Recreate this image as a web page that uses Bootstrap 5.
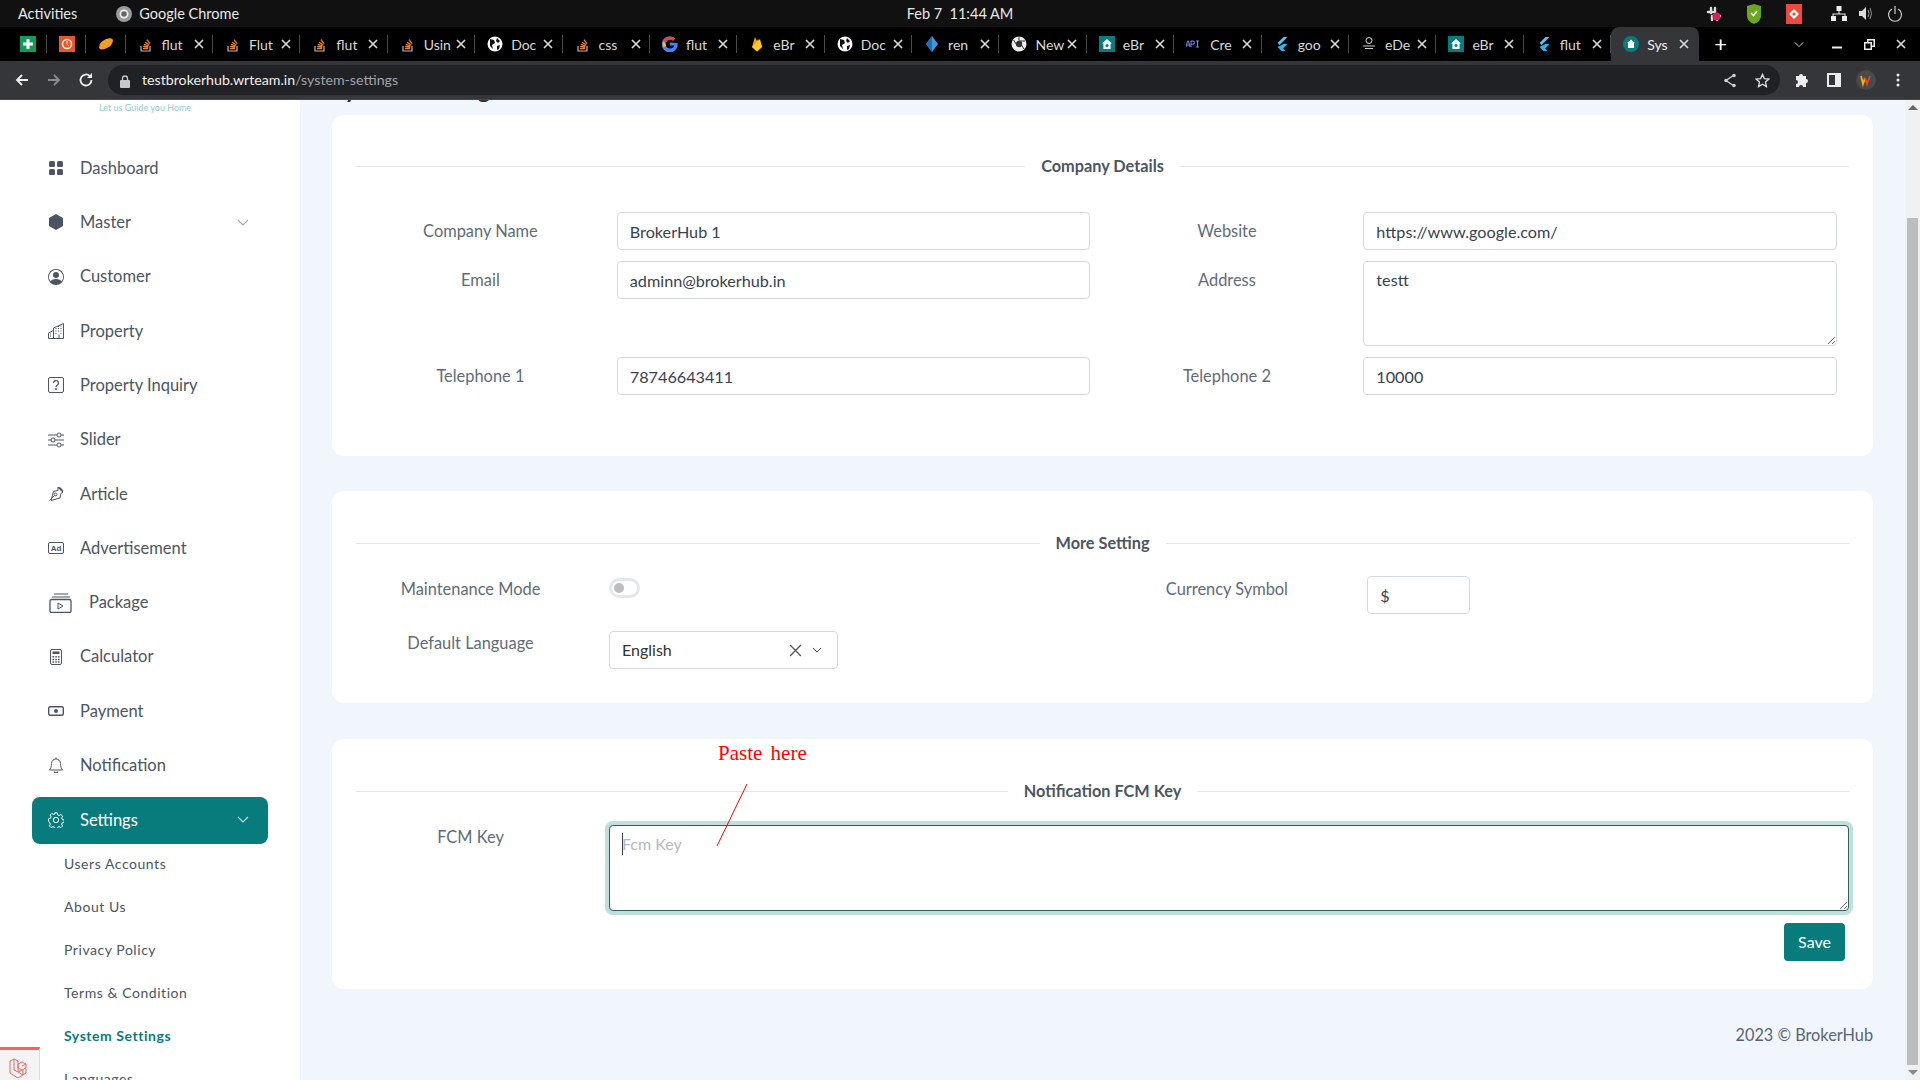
<!DOCTYPE html>
<html lang="en">
<head>
<meta charset="utf-8">
<title>System Settings</title>
<link href="https://cdn.jsdelivr.net/npm/bootstrap@5.3.0/dist/css/bootstrap.min.css" rel="stylesheet">
<script src="https://cdn.jsdelivr.net/npm/bootstrap@5.3.0/dist/js/bootstrap.bundle.min.js"></script>
<style>
html,body{height:1080px;overflow:hidden}
body{font-family:"Lato","Liberation Sans",sans-serif;background:#f1f6fd;color:#4b5563;font-size:16px}
.sysbar{height:27px;background:#111;color:#e8e8e8;font-size:14.5px;padding:0 6px 0 18px}
.sysbar .clock{position:absolute;left:0;right:0;text-align:center;top:3px}
.sys-app{margin-left:39px;gap:7px}
.sys-right{margin-left:auto;width:208px}
.tabstrip{height:34px;background:#000;color:#d8d8d8;font-size:14px;padding-left:8px}
.ptab{width:39.2px;height:34px;display:flex;align-items:center;justify-content:center;position:relative}
.ptab::after,.rtab::after{content:"";position:absolute;right:0;top:8px;height:18px;width:1px;background:#4a4a4a}
.rtab{width:87.4px;height:34px;display:flex;align-items:center;position:relative;padding-left:12px}
.rtab .tt{margin-left:8px;white-space:nowrap}
.rtab .xx{position:absolute;left:68px;top:8px;width:12px;height:18px;display:flex;align-items:center}
.rtab.on{background:#35363a;color:#eee;border-radius:8px 8px 0 0}
.rtab.on::after{display:none}
.plus{width:44px;text-align:center;color:#fff;font-size:22px;line-height:34px}
.winbtns{margin-left:auto;padding-right:3px}
.winbtns span{display:flex;width:32px;justify-content:center;align-items:center;height:34px}
.winbtns span:first-child{margin-right:6px}
.toolbar{height:39px;background:#35363a;border-bottom:1px solid #4a4a4a;padding:0 6px}
.navbtn{width:32px;display:flex;justify-content:center}
.addr{height:30px;width:1672px;margin-left:6px;background:#202124;border-radius:15px;color:#eee;font-size:14.2px;padding:0 0 0 12px}
.addr .dim{color:#a0a3a8}
.addr .lockwrap{width:22px}
.addr .rtools{margin-left:auto;gap:14px;padding-right:10px}
.tools{margin-left:6px}
.tools span{width:32px;display:flex;justify-content:center;align-items:center}
.shell{height:980px}
.side{width:300px;background:#fff;flex:none;overflow:hidden;position:relative}
.tagline{font-size:9px;color:#8fcfcf;padding-left:99px;height:14px;line-height:16px;margin-bottom:27px}
.mitem{height:54.3px;margin:0 32px;padding-left:16px;display:flex;align-items:center;color:#4b5563;font-size:16.5px;text-decoration:none;position:relative}
.mitem svg.ic{width:16px;height:16px;margin-right:16px;flex:none}
.mitem svg.wide{width:23px;height:20px;margin-right:17px;margin-left:1px}
.mitem .chev{position:absolute;left:205px;top:24px;width:12px;height:7px}
.mitem.active{background:#087c7c;color:#fff;height:47px;border-radius:8px;margin-top:4px;margin-bottom:-2px}
.mitem.active .chev{top:19px}
.sitem{display:block;height:43px;line-height:43px;padding-left:64px;font-size:14px;color:#4b5563;text-decoration:none;letter-spacing:.55px}
.sitem.cur{color:#087c7c;font-weight:700}
.laradev{position:fixed;left:0;bottom:0;width:40px;height:33px;background:#f4f4f4;border-top:3px solid #f4645f;border-right:1px solid #ddd;padding:5px 0 0 9px}
.mainbox{flex:1 1 auto;padding:0 32px;min-width:0;overflow:hidden}
.clipttl{height:15px;overflow:hidden}
.clipttl h3{font-size:24px;color:#333;margin:-26px 0 0;line-height:30px;font-weight:700}
.pane{background:#fff;border:0;border-radius:12px;padding:0 36px;position:relative}
.pane1{height:341px;margin-bottom:35px}
.pane2{height:212px;margin-bottom:36px}
.pane3{height:250px}
.legendline{display:flex;align-items:center;margin:0 -12px;font-weight:700;font-size:16.3px;color:#4b5563;height:0;position:relative}
.legendline::before,.legendline::after{content:"";flex:1;border-top:1px solid #e3e5ea}
.legendline span{padding:0 16px}
.lg-a{top:51px}
.lg-b{top:52px}
.lg-c{top:52px}
.rowstart-a{padding-top:97px}
.rowstart-b{padding-top:86px}
.fld-row{margin-bottom:11px}
.flab{text-align:center;color:#5f6b7a;font-size:16.4px;padding-top:7px;line-height:24px;margin:0}
.fctl{border:1px solid #d6d9de;border-radius:4px;height:38px;font-size:16.2px;color:#374151;padding:6px 12px;box-shadow:none}
.fctl:focus{box-shadow:none;border-color:#d6d9de}
textarea.addrarea{height:85px;min-height:85px}
.blab{width:229px;flex:none;text-align:center;color:#5f6b7a;font-size:16.4px;line-height:24px}
.blab-gap{margin-right:24px}
.togl{width:31px;height:20px;border-radius:10px;background:#fff;border:3px solid #e2e6ee;position:relative;flex:none;margin-top:1px}
.togl i{position:absolute;left:2px;top:2px;width:10px;height:10px;border-radius:50%;background:#bdbdbd}
.rowpull{margin-left:-12px}
.pickrow{margin-top:30px}
.pickbox{width:229px;height:38px;border:1px solid #d6d9de;border-radius:4px;padding:0 15px 0 12px;color:#333}
.pickx{margin-right:10px}
.curbox{width:103px;margin-left:4px;margin-top:-1px;flex:none}
.flab-top{padding-top:0}
.pastelbl{position:absolute;left:386px;top:1px;color:#f00;font-family:"Liberation Serif",serif;font-size:21px;line-height:26px;word-spacing:3px}
.redline{position:absolute;left:384px;top:44px;width:32px;height:64px;pointer-events:none;z-index:2}
.caretbar{position:absolute;left:290px;top:94px;width:1px;height:22px;background:#334155;z-index:2}
.fcmlab{position:absolute;left:24px;top:86px}
.fcmwrap{padding-top:86px;margin:0 -12px}
.fcmarea{width:1240px;height:86px;border:1px solid #2f5f5f;border-radius:4px;box-shadow:0 0 0 4px #bfe0db;font-size:16px;padding:6px 12px;outline:0;background:#fff;display:block;margin-left:253px}
.fcmarea::placeholder{color:#b3b8bf}
.savewrap{margin-top:12px;margin-right:-8px}
.btn-keep{background:#087c7c;color:#fff;border:0;width:61px;height:38px;border-radius:4px;font-size:16px;padding:0}
.footnote{text-align:right;font-size:16.3px;line-height:24px;color:#5a6472;padding-top:34px}
.scrolltrack{width:15px;flex:none;background:#f1f1f1;position:relative;padding:118px 2px 0}
.scrollthumb{height:847px;background:#bdbdbd}
.arr-up,.arr-dn{position:absolute;left:3px;border-left:5px solid transparent;border-right:5px solid transparent}
.arr-up{top:5px;border-bottom:5px solid #666}
.arr-dn{bottom:5px;border-top:5px solid #8a8a8a}
</style>
</head>
<body>
<svg width="0" height="0" class="position-absolute">
 <symbol id="so" viewBox="0 0 16 16"><path d="M3 10v5h9v-5" fill="none" stroke="#bbb" stroke-width="1.2"/><path d="M5 12.5h5M5.2 10.400l5 .6M5.800 8.400l4.800 1.500M7 6.200l4.200 2.600M9 3.600l3 4" stroke="#f48024" stroke-width="1.3" fill="none"/></symbol>
 <symbol id="globe" viewBox="0 0 16 16"><circle cx="8" cy="8" r="7.5" fill="#fff"/><path d="M3 3l4 1 1 3-3 2 1 4-3-3zM10 2l3 3-2 2-2-2zM10 10l3-1-1 4-2 1z" fill="#111"/></symbol>
 <symbol id="flut" viewBox="0 0 16 16"><path d="M9.500 1h4L5.500 9l-2-2z" fill="#54c5f8"/><path d="M9.500 8h4L9 12.500l2.500 2.500h-4L3.500 11z" fill="#29b6f6"/></symbol>
 <symbol id="house" viewBox="0 0 16 16"><rect width="16" height="16" fill="#087c7c"/><path d="M8 3l5 4.500h-1.400V13H4.400V7.500H3z" fill="#fff"/><circle cx="8" cy="9.500" r="1.500" fill="#087c7c"/></symbol>
 <symbol id="xm" viewBox="0 0 10 10"><path d="M1 1l8 8M9 1l-8 8" stroke="#ddd" stroke-width="1.6"/></symbol>
 <symbol id="chv" viewBox="0 0 12 7"><path d="M1 1l5 5 5-5" fill="none" stroke="currentColor" stroke-width="1.1"/></symbol>
</svg>

<div class="sysbar d-flex align-items-center position-relative">
 <span>Activities</span>
 <span class="sys-app d-flex align-items-center">
  <svg width="16" height="16" viewBox="0 0 16 16"><circle cx="8" cy="8" r="8" fill="#9a9a9a"/><circle cx="8" cy="8" r="4.500" fill="#eee"/><circle cx="8" cy="8" r="2.800" fill="#666"/></svg>
  Google Chrome</span>
 <span class="clock">Feb 7&nbsp;&nbsp;11:44 AM</span>
 <span class="sys-right d-flex align-items-center">
  <svg width="16" height="16" viewBox="0 0 16 16" class="me-4"><path d="M2 6h5M5 2v5M9 2v4M9 10h5M11 9v5M6 10v4" stroke="#ddd" stroke-width="2.400" stroke-linecap="round"/><circle cx="10.500" cy="10.500" r="4" fill="#e01e5a"/></svg>
  <svg width="16" height="20" viewBox="0 0 16 20" style="margin-right:24px"><path d="M1 2l7-2 7 2v10q0 5-7 8-7-3-7-8z" fill="#6aa820"/><path d="M5 9l2.500 2.500L11 7" stroke="#fff" stroke-width="1.500" fill="none"/></svg>
  <svg width="16" height="20" viewBox="0 0 16 20" style="margin-right:29px"><rect width="16" height="20" fill="#ee4b3e"/><path d="M3 10l5-5 5 5-5 5zM6 10l2 2 2-2-2-2z" fill="#fff"/></svg>
  <svg width="16" height="15" viewBox="0 0 16 15" style="margin-right:11px"><path d="M5.500 0h5v5h-5zM0 10h5v5H0zM11 10h5v5h-5zM7.500 5h1v2.500h6V10h-1V8.500h-11V10h-1V7.500h6z" fill="#eee"/></svg>
  <svg width="16" height="15" viewBox="0 0 16 15" style="margin-right:13px"><path d="M1 5h3l4-4v13l-4-4H1z" fill="#ddd"/><path d="M10 4q2 3.500 0 7M12 2q3 5.500 0 11" stroke="#999" fill="none"/></svg>
  <svg width="16" height="16" viewBox="0 0 16 16"><path d="M5 3a6.500 6.500 0 1 0 6 0M8 0v8" stroke="#ccc" stroke-width="1.200" fill="none"/></svg>
 </span>
</div>

<div class="tabstrip d-flex">
 <span class="ptab"><svg width="16" height="16" viewBox="0 0 16 16"><rect width="16" height="16" fill="#0f9d58"/><path d="M6.500 3h3v3.500H13v3H9.500V13h-3V9.500H3v-3h3.500z" fill="#fff"/></svg></span>
 <span class="ptab"><svg width="16" height="16" viewBox="0 0 16 16"><rect width="16" height="16" fill="#e8562a"/><circle cx="8" cy="8" r="4.500" fill="none" stroke="#eee" stroke-width="1.500"/><path d="M8 5v3l2 2" stroke="#eee" fill="none"/></svg></span>
 <span class="ptab"><svg width="16" height="12" viewBox="0 0 16 12"><path d="M1 10q0-6 7-9 6-2 7 1 0 5-6 8-6 3-8 0z" fill="#f59a23"/></svg></span>
 <span class="rtab"><svg width="16" height="16"><use href="#so"/></svg><span class="tt">flut</span><span class="xx"><svg width="10" height="10"><use href="#xm"/></svg></span></span>
 <span class="rtab"><svg width="16" height="16"><use href="#so"/></svg><span class="tt">Flut</span><span class="xx"><svg width="10" height="10"><use href="#xm"/></svg></span></span>
 <span class="rtab"><svg width="16" height="16"><use href="#so"/></svg><span class="tt">flut</span><span class="xx"><svg width="10" height="10"><use href="#xm"/></svg></span></span>
 <span class="rtab"><svg width="16" height="16"><use href="#so"/></svg><span class="tt">Usin</span><span class="xx"><svg width="10" height="10"><use href="#xm"/></svg></span></span>
 <span class="rtab"><svg width="16" height="16"><use href="#globe"/></svg><span class="tt">Doc</span><span class="xx"><svg width="10" height="10"><use href="#xm"/></svg></span></span>
 <span class="rtab"><svg width="16" height="16"><use href="#so"/></svg><span class="tt">css</span><span class="xx"><svg width="10" height="10"><use href="#xm"/></svg></span></span>
 <span class="rtab"><svg width="16" height="16" viewBox="0 0 16 16"><path d="M8 6.500v3h4.300Q11.500 12.500 8 12.500a4.500 4.500 0 1 1 3-7.800l2.200-2.200A8 8 0 1 0 15.600 7z" fill="#4285f4"/><path d="M1.600 4.500L4.200 6.500A4.500 4.500 0 0 1 11 4.700l2.200-2.200A8 8 0 0 0 1.600 4.500z" fill="#ea4335"/><path d="M1.600 11.500l2.600-2A4.500 4.500 0 0 1 3.600 7L1 5.500a8 8 0 0 0 .6 6z" fill="#fbbc05"/></svg><span class="tt">flut</span><span class="xx"><svg width="10" height="10"><use href="#xm"/></svg></span></span>
 <span class="rtab"><svg width="16" height="16" viewBox="0 0 16 16"><path d="M3 11L6 1l2 4 1-2 4 8-5 4.500z" fill="#ffa000"/><path d="M3 11l5 4.500 5-4.500-2-8z" fill="#ffca28"/></svg><span class="tt">eBr</span><span class="xx"><svg width="10" height="10"><use href="#xm"/></svg></span></span>
 <span class="rtab"><svg width="16" height="16"><use href="#globe"/></svg><span class="tt">Doc</span><span class="xx"><svg width="10" height="10"><use href="#xm"/></svg></span></span>
 <span class="rtab"><svg width="16" height="16" viewBox="0 0 16 16"><path d="M8 0l6 8-6 8-6-8z" fill="#3a9bdc"/><path d="M8 0l-6 8 6 8z" fill="#1c6fb5"/></svg><span class="tt">ren</span><span class="xx"><svg width="10" height="10"><use href="#xm"/></svg></span></span>
 <span class="rtab"><svg width="16" height="16" viewBox="0 0 16 16"><circle cx="8" cy="8" r="7.500" fill="#eee"/><circle cx="8" cy="8" r="3.200" fill="#333"/><path d="M8 .5v4M14 5H8M2.500 4l4 6M13 13L9 7" stroke="#333"/></svg><span class="tt">New</span><span class="xx"><svg width="10" height="10"><use href="#xm"/></svg></span></span>
 <span class="rtab"><svg width="16" height="16"><use href="#house"/></svg><span class="tt">eBr</span><span class="xx"><svg width="10" height="10"><use href="#xm"/></svg></span></span>
 <span class="rtab"><svg width="16" height="16" viewBox="0 0 16 16"><path d="M0 11l1.500-6h1L4 11M.6 9h2.800M5 11V5h2a1.500 1.500 0 0 1 0 3.200H5M10 5h3M11.500 5v6M10 11h3" stroke="#6c8cff" fill="none"/></svg><span class="tt">Cre</span><span class="xx"><svg width="10" height="10"><use href="#xm"/></svg></span></span>
 <span class="rtab"><svg width="16" height="16"><use href="#flut"/></svg><span class="tt">goo</span><span class="xx"><svg width="10" height="10"><use href="#xm"/></svg></span></span>
 <span class="rtab"><svg width="16" height="16" viewBox="0 0 16 16"><circle cx="8" cy="4.500" r="3" fill="none" stroke="#ddd"/><path d="M2 10h12M4 12.500h8" stroke="#ccc"/></svg><span class="tt">eDe</span><span class="xx"><svg width="10" height="10"><use href="#xm"/></svg></span></span>
 <span class="rtab"><svg width="16" height="16"><use href="#house"/></svg><span class="tt">eBr</span><span class="xx"><svg width="10" height="10"><use href="#xm"/></svg></span></span>
 <span class="rtab"><svg width="16" height="16"><use href="#flut"/></svg><span class="tt">flut</span><span class="xx"><svg width="10" height="10"><use href="#xm"/></svg></span></span>
 <span class="rtab on"><svg width="16" height="16" viewBox="0 0 16 16"><circle cx="8" cy="8" r="8" fill="#087c7c"/><path d="M8 3.500l4 3.500h-1v5H5V7H4z" fill="#fff"/></svg><span class="tt">Sys</span><span class="xx"><svg width="10" height="10"><use href="#xm"/></svg></span></span>
 <span class="plus">+</span>
 <span class="winbtns d-flex">
  <span><svg width="10" height="7" style="color:#ddd"><use href="#chv"/></svg></span>
  <span><svg width="10" height="10" viewBox="0 0 10 10"><path d="M0 8.500h10" stroke="#eee" stroke-width="2"/></svg></span>
  <span><svg width="11" height="11" viewBox="0 0 11 11"><path d="M3 0h8v8H8v3H0V3h3zM1.500 4.500v5h5v-5zM4.500 1.500V3H8v3.500h1.500v-5z" fill="#eee"/></svg></span>
  <span><svg width="10" height="10"><use href="#xm"/></svg></span>
 </span>
</div>

<div class="toolbar d-flex align-items-center">
 <span class="navbtn"><svg width="16" height="16" viewBox="0 0 16 16"><path d="M14 8H3M8 3L3 8l5 5" fill="none" stroke="#eee" stroke-width="1.800"/></svg></span>
 <span class="navbtn"><svg width="16" height="16" viewBox="0 0 16 16"><path d="M2 8h11M8 3l5 5-5 5" fill="none" stroke="#8a8c90" stroke-width="1.800"/></svg></span>
 <span class="navbtn"><svg width="16" height="16" viewBox="0 0 16 16"><path d="M13.500 8a5.500 5.500 0 1 1-1.600-3.900" fill="none" stroke="#eee" stroke-width="1.800"/><path d="M14 1v5H9z" fill="#eee"/></svg></span>
 <div class="addr d-flex align-items-center">
  <span class="lockwrap"><svg width="10" height="13" viewBox="0 0 10 13"><rect y="5" width="10" height="8" rx="1" fill="#c4c7cc"/><path d="M2.500 5V3.500a2.500 2.500 0 0 1 5 0V5" fill="none" stroke="#c4c7cc" stroke-width="1.300"/></svg></span>
  <span>testbrokerhub.wrteam.in<span class="dim">/system-settings</span></span>
  <span class="rtools d-flex align-items-center">
   <svg width="14" height="15" viewBox="0 0 14 15"><path d="M11 2L3 7.500l8 5.500" fill="none" stroke="#ccc" stroke-width="1.500"/><circle cx="11" cy="2.500" r="1.800" fill="#ccc"/><circle cx="3" cy="7.500" r="1.800" fill="#ccc"/><circle cx="11" cy="12.500" r="1.800" fill="#ccc"/></svg>
   <svg class="ms-1" width="15" height="15" viewBox="0 0 16 16"><path d="M8 1.500l2 4.500 4.800.5-3.600 3.200 1 4.800L8 12l-4.200 2.500 1-4.800L1.200 6.500 6 6z" fill="none" stroke="#ddd" stroke-width="1.400"/></svg>
  </span>
 </div>
 <div class="tools d-flex align-items-center">
  <span><svg width="16" height="16" viewBox="0 0 16 16"><path d="M2 4h3a2 2 0 0 1 4 0h3v3a2 2 0 0 1 0 4v4H9a2 2 0 0 0-4 0H2v-3a2 2 0 0 0 0-4z" fill="#eee"/></svg></span>
  <span><svg width="14" height="14" viewBox="0 0 14 14"><path d="M0 0h14v14H0zM2 2v10h6V2z" fill="#eee" fill-rule="evenodd"/></svg></span>
  <span><svg width="20" height="20" viewBox="0 0 20 20"><circle cx="10" cy="10" r="10" fill="#4a4a4a"/><path d="M5 6l2 8 2-6" stroke="#f4b400" stroke-width="1.800" fill="none"/><path d="M9 8l2 6 3-8" stroke="#ea4335" stroke-width="1.800" fill="none"/></svg></span>
  <span><svg width="4" height="14" viewBox="0 0 4 14"><circle cx="2" cy="2" r="1.500" fill="#eee"/><circle cx="2" cy="7" r="1.500" fill="#eee"/><circle cx="2" cy="12" r="1.500" fill="#eee"/></svg></span>
 </div>
</div>

<div class="shell d-flex">
 <nav class="side">
  <div class="tagline">Let us Guide you Home</div>
  <a class="mitem" href="#"><svg class="ic" viewBox="0 0 16 16" fill="#4b5563"><rect x="1" y="1" width="6" height="6" rx="1.500"/><rect x="9" y="1" width="6" height="6" rx="1.500"/><rect x="1" y="9" width="6" height="6" rx="1.500"/><rect x="9" y="9" width="6" height="6" rx="1.500"/></svg>Dashboard</a>
  <a class="mitem" href="#"><svg class="ic" viewBox="0 0 16 16" fill="#4b5563"><path d="M8 0l7 4v8l-7 4-7-4V4z"/></svg>Master<svg class="chev" style="color:#aaa"><use href="#chv"/></svg></a>
  <a class="mitem" href="#"><svg class="ic" viewBox="0 0 16 16" fill="#4b5563"><path d="M11 6a3 3 0 1 1-6 0 3 3 0 0 1 6 0z"/><path fill-rule="evenodd" d="M0 8a8 8 0 1 1 16 0A8 8 0 0 1 0 8zm8-7a7 7 0 0 0-5.468 11.370C3.242 11.226 4.805 10 8 10s4.757 1.225 5.468 2.370A7 7 0 0 0 8 1z"/></svg>Customer</a>
  <a class="mitem" href="#"><svg class="ic" viewBox="0 0 16 16" fill="none" stroke="#4b5563"><path d="M15.500 15.500H.5V10l5-2.500V5l10-4.500zM5.500 15.500V7.500M11 15.500v-4"/><path d="M7.500 5.500h1M10 5.500h1M12.500 5.500h1M7.500 8h1M10 8h1M12.500 8h1M2 11h1M2 13h1M7.500 10.500h1M12.500 10.500h1M12.500 3h1M10 3.500h1"/></svg>Property</a>
  <a class="mitem" href="#"><svg class="ic" viewBox="0 0 16 16"><rect x=".5" y=".5" width="15" height="15" rx="1.500" fill="none" stroke="#4b5563"/><path d="M5.500 6a2.500 2.500 0 1 1 4 2c-1 .7-1.500 1-1.500 2.300" fill="none" stroke="#4b5563" stroke-width="1.300"/><circle cx="8" cy="12" r=".9" fill="#4b5563"/></svg>Property Inquiry</a>
  <a class="mitem" href="#"><svg class="ic" viewBox="0 0 16 16" fill="none" stroke="#4b5563"><path d="M0 3h9M13 3h3M0 8h3M7 8h9M0 13h9M13 13h3"/><circle cx="11" cy="3" r="2"/><circle cx="5" cy="8" r="2"/><circle cx="11" cy="13" r="2"/></svg>Slider</a>
  <a class="mitem" href="#"><svg class="ic" viewBox="0 0 16 16" fill="none" stroke="#4b5563"><path d="M10 1l5 5-2 1.500-1 4.500-9 2.500L5.500 5.500 10 4.500z"/><path d="M1.500 14.500l5-5"/><circle cx="7.500" cy="8.500" r="1.300"/><path d="M11 1.500L14.500 5" stroke-width="2"/></svg>Article</a>
  <a class="mitem" href="#"><svg class="ic" viewBox="0 0 16 16"><rect x=".5" y="2.500" width="15" height="11" rx="1.500" fill="none" stroke="#4b5563"/><text x="8" y="11" text-anchor="middle" font-size="8" font-weight="700" fill="#4b5563" font-family="Liberation Sans">Ad</text></svg>Advertisement</a>
  <a class="mitem" href="#"><svg class="ic wide" viewBox="0 0 23 20" fill="none" stroke="#4b5563"><path d="M5 1h14M3 4h18"/><rect x="1" y="6.500" width="21" height="13" rx="1.500" stroke-width="1.300"/><path d="M9 10v6l5-3z"/></svg>Package</a>
  <a class="mitem" href="#"><svg class="ic" viewBox="0 0 16 16"><rect x="2.500" y=".5" width="11" height="15" rx="1.500" fill="none" stroke="#4b5563"/><rect x="4.500" y="2.500" width="7" height="2.500" fill="#4b5563"/><path d="M4.500 7h1.500v1.500H4.500zM7.300 7h1.500v1.500H7.300zM10 7h1.500v1.500H10zM4.500 9.700h1.500v1.500H4.500zM7.300 9.700h1.500v1.500H7.300zM10 9.700h1.500v1.500H10zM4.500 12.300h1.500v1.500H4.500zM7.300 12.300h1.500v1.500H7.300zM10 12.300h1.500v1.500H10z" fill="#4b5563"/></svg>Calculator</a>
  <a class="mitem" href="#"><svg class="ic" viewBox="0 0 16 16"><rect x=".7" y="3.700" width="14.600" height="8.600" rx="1.500" fill="none" stroke="#4b5563" stroke-width="1.400"/><circle cx="8" cy="8" r="2" fill="#4b5563"/></svg>Payment</a>
  <a class="mitem" href="#"><svg class="ic" viewBox="0 0 16 16" fill="none" stroke="#4b5563"><path d="M8 2a4.500 4.500 0 0 0-4.500 4.500c0 3-1 5.500-2 6.500h13c-1-1-2-3.500-2-6.500A4.500 4.500 0 0 0 8 2zM8 .5V2"/><path d="M6.500 14.500a1.500 1.500 0 0 0 3 0" stroke-width="1.300"/></svg>Notification</a>
  <a class="mitem active" href="#"><svg class="ic" viewBox="0 0 16 16" fill="none" stroke="#fff"><circle cx="8" cy="8" r="2.700"/><path d="M6.800.8h2.400l.4 2 1.500.7 1.800-1 1.700 1.700-1 1.800.7 1.500 1.900.4v2.400l-2 .4-.6 1.400 1 1.800-1.700 1.700-1.800-1-1.500.7-.4 1.900H6.800l-.4-2-1.500-.6-1.800 1-1.700-1.700 1-1.800-.7-1.500L.5 9.200V6.800l1.900-.4.700-1.500-1-1.800 1.700-1.700 1.800 1 1.500-.6z"/></svg>Settings<svg class="chev" style="color:#bfe0e0"><use href="#chv"/></svg></a>
  <a class="sitem" href="#">Users Accounts</a>
  <a class="sitem" href="#">About Us</a>
  <a class="sitem" href="#">Privacy Policy</a>
  <a class="sitem" href="#">Terms &amp; Condition</a>
  <a class="sitem cur" href="#">System Settings</a>
  <a class="sitem" href="#">Languages</a>
 </nav>

 <main class="mainbox">
  <div class="clipttl"><h3>System Settings</h3></div>

  <section class="pane pane1">
   <div class="legendline lg-a"><span>Company Details</span></div>
   <div class="row fld-row rowstart-a">
    <div class="col-6"><div class="row"><label class="col-4 flab">Company Name</label><div class="col-8"><input class="form-control fctl" value="BrokerHub 1"></div></div></div>
    <div class="col-6"><div class="row"><label class="col-4 flab">Website</label><div class="col-8"><input class="form-control fctl" value="https://www.google.com/"></div></div></div>
   </div>
   <div class="row fld-row">
    <div class="col-6"><div class="row"><label class="col-4 flab">Email</label><div class="col-8"><input class="form-control fctl" value="adminn@brokerhub.in"></div></div></div>
    <div class="col-6"><div class="row"><label class="col-4 flab">Address</label><div class="col-8"><textarea class="form-control fctl addrarea">testt</textarea></div></div></div>
   </div>
   <div class="row">
    <div class="col-6"><div class="row"><label class="col-4 flab">Telephone 1</label><div class="col-8"><input class="form-control fctl" value="78746643411"></div></div></div>
    <div class="col-6"><div class="row"><label class="col-4 flab">Telephone 2</label><div class="col-8"><input class="form-control fctl" value="10000"></div></div></div>
   </div>
  </section>

  <section class="pane pane2">
   <div class="legendline lg-b"><span>More Setting</span></div>
   <div class="row rowstart-b">
    <div class="col-6">
     <div class="d-flex rowpull">
      <span class="blab blab-gap">Maintenance Mode</span>
      <span class="togl"><i></i></span>
     </div>
     <div class="d-flex rowpull pickrow">
      <span class="blab blab-gap">Default Language</span>
      <div class="pickbox d-flex align-items-center">
       <span class="flex-grow-1">English</span>
       <svg width="13" height="13" viewBox="0 0 12 12" class="pickx"><path d="M1 1l10 10M11 1L1 11" stroke="#555" stroke-width="1.200"/></svg>
       <svg width="10" height="6" style="color:#333"><use href="#chv"/></svg>
      </div>
     </div>
    </div>
    <div class="col-6"><div class="row"><span class="col-4 flab flab-top">Currency Symbol</span><div class="col-8"><input class="form-control fctl curbox" value="$"></div></div></div>
   </div>
  </section>

  <section class="pane pane3">
   <div class="pastelbl">Paste here</div>
   <svg class="redline" viewBox="0 0 32 64"><path d="M31 1L1 63" stroke="#f00" fill="none"/></svg>
   <span class="caretbar"></span>
   <div class="legendline lg-c"><span>Notification FCM Key</span></div>
   <div class="d-flex fcmwrap">
    <span class="blab fcmlab">FCM Key</span>
    <textarea class="fcmarea" placeholder="Fcm Key"></textarea>
   </div>
   <div class="d-flex justify-content-end savewrap"><button class="btn btn-keep">Save</button></div>
  </section>

  <div class="footnote">2023 © BrokerHub</div>
 </main>

 <div class="scrolltrack"><span class="arr-up"></span><div class="scrollthumb"></div><span class="arr-dn"></span></div>
</div>

<div class="laradev"><svg width="22" height="22" viewBox="0 0 22 22" fill="none" stroke="#f4645f"><path d="M1 3l4-2 4 2v11l5 3v-5M1 3v12l8 5 8-5v-4M5 1v11l4 2M9 14l8-4V6l-4-2-4 2v4l4 2M13 8l4-2"/></svg></div>
</body>
</html>
